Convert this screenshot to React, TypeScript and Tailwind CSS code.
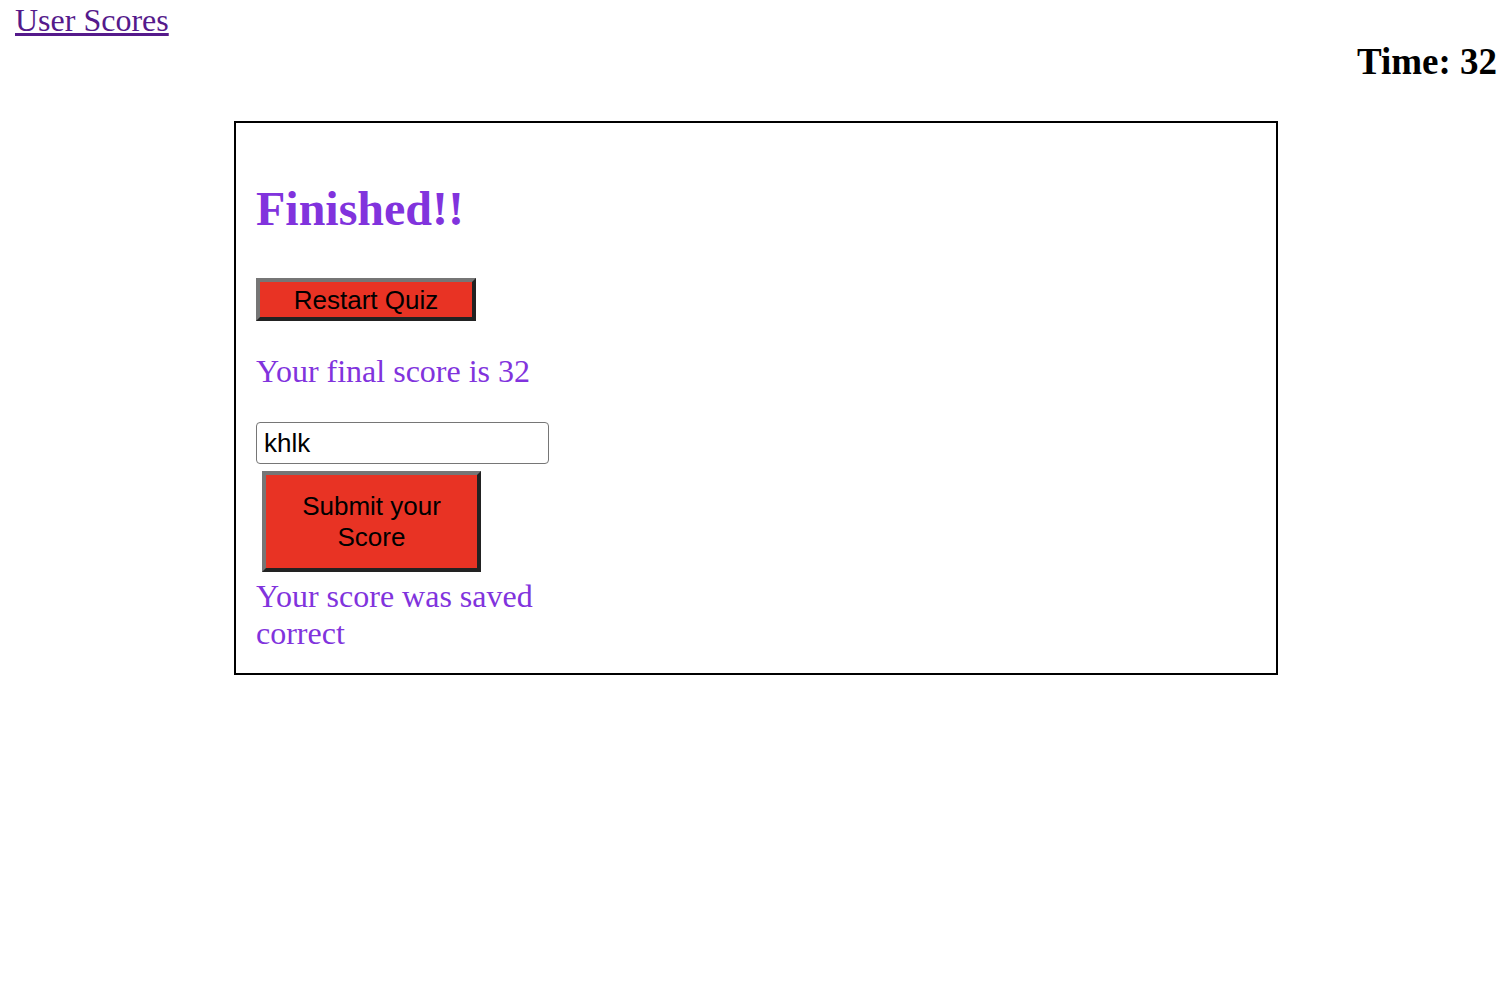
import React from "react";

const App = () => {
  return (
    <div className="min-h-screen bg-white font-['Liberation_Serif',serif] text-black">
      {/* Top bar */}
      <div className="pl-[15px] pt-[2px]">
        <a href="#scores" className="text-[32px] leading-[37px] text-[#551a8b] underline">
          User Scores
        </a>
      </div>
      <div className="pr-[11px] pt-[2px] text-right text-[37px] font-bold leading-[42px]">
        Time: 32
      </div>

      {/* Result card */}
      <div className="ml-[234px] mt-[38px] w-[1044px] border-2 border-black px-[20px] pb-[21px] pt-[58px]">
        <h1 className="text-[48px] font-bold leading-[55px] text-[#8133dd]">Finished!!</h1>

        <button className="mt-[42px] block h-[43px] w-[220px] border-4 border-t-[#767676] border-l-[#767676] border-r-[#222] border-b-[#222] bg-[#e83324] font-['Liberation_Sans',sans-serif] text-[26px] leading-[30px] text-black">
          Restart Quiz
        </button>

        <p className="mt-[32px] text-[32px] leading-[37px] text-[#8133dd]">
          Your final score is 32
        </p>

        <div className="mt-[32px] w-[293px]">
          <input
            defaultValue="khlk"
            className="block h-[42px] w-[293px] rounded-[4px] border border-[#767676] px-[7px] font-['Liberation_Sans',sans-serif] text-[26px] text-black outline-none"
          />
          <button className="ml-[6px] mt-[7px] block h-[101px] w-[219px] border-4 border-t-[#767676] border-l-[#767676] border-r-[#222] border-b-[#222] bg-[#e83324] px-[30px] font-['Liberation_Sans',sans-serif] text-[26px] leading-[31px] text-black">
            Submit your Score
          </button>
          <p className="mt-[6px] text-[32px] leading-[37px] text-[#8133dd]">
            Your score was saved correct
          </p>
        </div>
      </div>
    </div>
  );
};

export default App;
